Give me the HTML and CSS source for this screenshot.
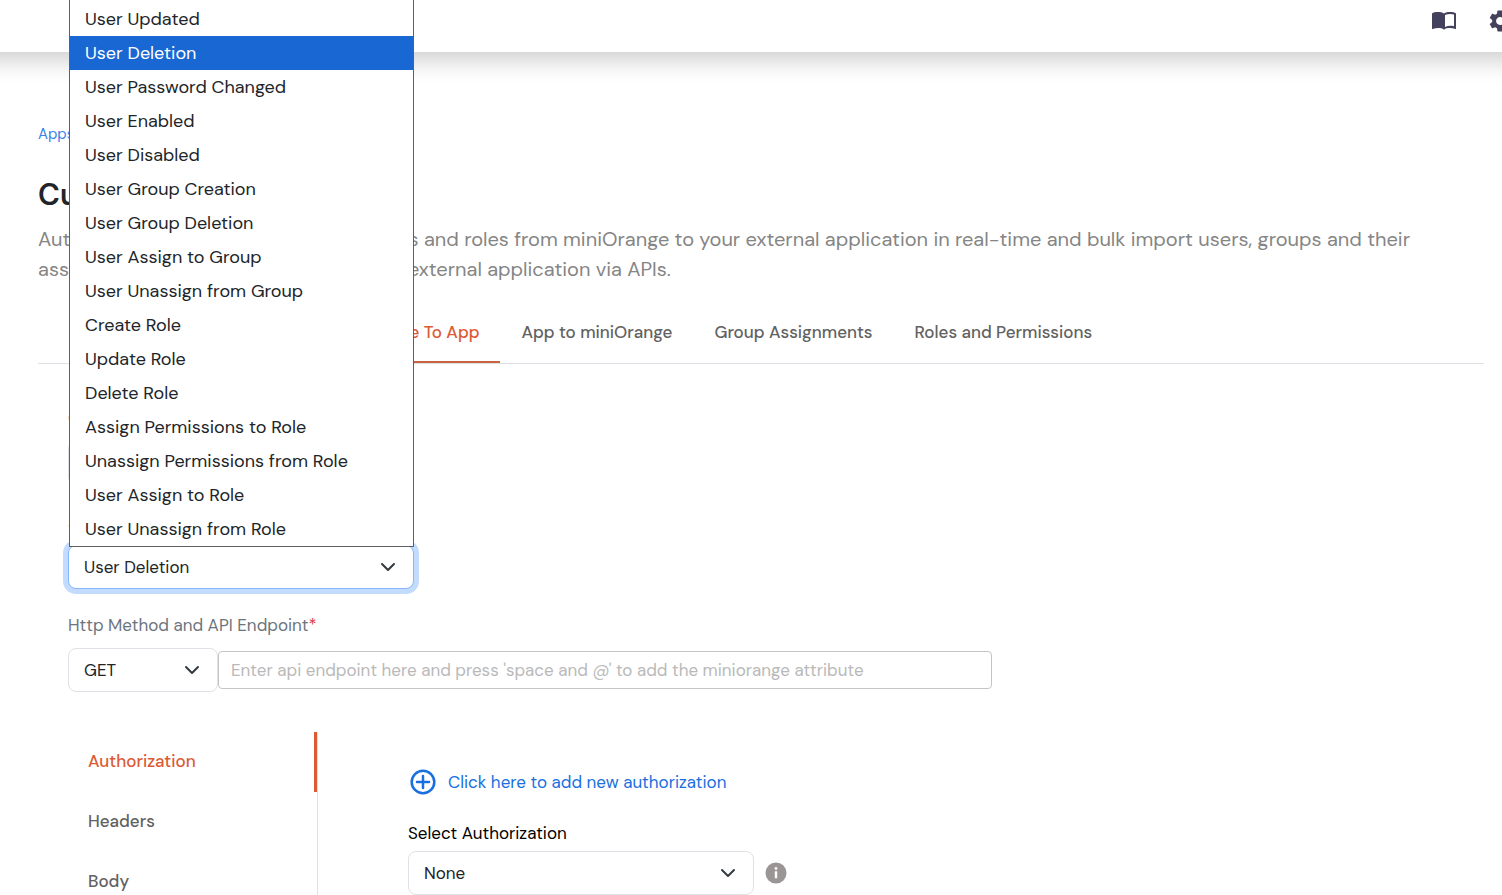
FILE: index.html
```
<!DOCTYPE html>
<html lang="en">
<head>
    <meta charset="UTF-8">
    <meta name="viewport" content="width=device-width, initial-scale=1.0">
    <title>Custom App Provisioning</title>
    <link rel="stylesheet" href="styles.css">
</head>
<body>
    <header class="topbar">
        <button type="button" class="icon-btn" aria-label="Documentation">
            <svg width="24" height="20" viewBox="0 0 24 20" fill="#44415c">
                <path fill-rule="evenodd" d="M12 2.6C9.800 1.100 7 .9 4.500 1.100 3 1.200 1.600 1.500.6 2c-.4.2-.6.5-.6.900v14.600c0 .5.3.7.700.600C4.500 16.800 8.900 16.600 12 18.700c3.100-2.100 7.500-1.900 11.300-.6.4.1.700-.1.700-.6V2.900c0-.4-.2-.7-.6-.9-1-.5-2.400-.8-3.900-.9C17 .9 14.200 1.100 12 2.600zm1 1.500c2.600-1.400 5.800-1.500 9-.7v11.900c-3-.7-6.200-.6-9 .7V4.100z"/>
            </svg>
        </button>
        <button type="button" class="icon-btn" aria-label="Settings">
            <svg width="24" height="24" viewBox="1 1 22 22" fill="#44415c">
                <path d="M19.140 12.940c.04-.3.060-.61.060-.94 0-.32-.02-.64-.07-.94l2.030-1.580c.18-.14.23-.41.120-.61l-1.920-3.320c-.12-.22-.37-.29-.59-.22l-2.390.96c-.5-.38-1.030-.7-1.620-.94l-.36-2.540c-.04-.24-.24-.41-.48-.41h-3.840c-.24 0-.43.17-.47.410l-.36 2.540c-.59.24-1.130.57-1.620.940l-2.390-.96c-.22-.08-.47 0-.59.220L2.740 8.870c-.12.21-.08.470.120.610l2.030 1.580c-.05.3-.09.630-.09.940s.02.640.070.940l-2.030 1.580c-.18.14-.23.410-.12.610l1.920 3.320c.12.220.370.290.590.220l2.390-.96c.5.380 1.030.7 1.620.940l.36 2.540c.05.240.240.410.480.410h3.840c.24 0 .44-.17.470-.41l.36-2.540c.59-.24 1.130-.56 1.620-.94l2.390.96c.22.080.470 0 .59-.22l1.920-3.320c.12-.22.070-.47-.12-.61l-2.010-1.580zM12 15.600c-1.980 0-3.600-1.620-3.600-3.600s1.620-3.600 3.600-3.600 3.600 1.620 3.600 3.600-1.620 3.600-3.600 3.600z"/>
            </svg>
        </button>
    </header>

    <main class="page">
        <nav class="breadcrumb" aria-label="Breadcrumb"><a href="#">Apps</a></nav>
        <h1 class="page-title">Custom App</h1>
        <p class="page-desc">Automated provisioning for users, groups and roles from miniOrange to your external application in real-time and bulk import users, groups and their assignments from miniOrange into your external application via APIs.</p>

        <nav class="tabs">
            <a href="#" class="tab">Configuration</a>
            <a href="#" class="tab active">miniOrange To App</a>
            <a href="#" class="tab">App to miniOrange</a>
            <a href="#" class="tab">Group Assignments</a>
            <a href="#" class="tab">Roles and Permissions</a>
        </nav>

        <form class="api-form">
            <label class="form-label" for="config">Configuration</label>
            <select class="form-select" id="config">
                <option>Default</option>
            </select>

            <label class="form-label" for="event">Select Event<span class="required">*</span></label>
            <div class="dropdown">
                <select class="form-select focused" id="event">
                    <option>User Deletion</option>
                </select>
                <!-- open event list -->
                <ul class="dropdown-list" role="listbox" aria-label="Events">
                    <li role="option">User Updated</li>
                    <li role="option" class="selected" aria-selected="true">User Deletion</li>
                    <li role="option">User Password Changed</li>
                    <li role="option">User Enabled</li>
                    <li role="option">User Disabled</li>
                    <li role="option">User Group Creation</li>
                    <li role="option">User Group Deletion</li>
                    <li role="option">User Assign to Group</li>
                    <li role="option">User Unassign from Group</li>
                    <li role="option">Create Role</li>
                    <li role="option">Update Role</li>
                    <li role="option">Delete Role</li>
                    <li role="option">Assign Permissions to Role</li>
                    <li role="option">Unassign Permissions from Role</li>
                    <li role="option">User Assign to Role</li>
                    <li role="option">User Unassign from Role</li>
                </ul>
            </div>

            <label class="form-label" for="endpoint">Http Method and API Endpoint<span class="required">*</span></label>
            <div class="endpoint-row">
                <select class="form-select method" aria-label="Http method">
                    <option>GET</option>
                    <option>POST</option>
                    <option>PUT</option>
                    <option>DELETE</option>
                </select>
                <input type="text" class="endpoint-input" id="endpoint" placeholder="Enter api endpoint here and press 'space and @' to add the miniorange attribute">
            </div>

            <div class="request">
                <nav class="side-tabs">
                    <a href="#" class="side-tab active">Authorization</a>
                    <a href="#" class="side-tab">Headers</a>
                    <a href="#" class="side-tab">Body</a>
                </nav>
                <div class="request-panel">
                    <a href="#" class="add-link">
                        <svg width="26" height="26" viewBox="0 0 26 26" fill="none" stroke="#1a6fe0" stroke-width="2.500">
                            <circle cx="13" cy="13" r="11.300"/>
                            <path d="M13 7v12M7 13h12" stroke-linecap="round"/>
                        </svg>
                        Click here to add new authorization
                    </a>
                    <label class="panel-label" for="auth">Select Authorization</label>
                    <div class="auth-row">
                        <select class="form-select" id="auth">
                            <option>None</option>
                        </select>
                        <svg width="22" height="22" viewBox="0 0 22 22">
                            <circle cx="11" cy="11" r="10.500" fill="#9b9595"/>
                            <circle cx="11" cy="6.500" r="1.400" fill="#fff"/>
                            <path d="M9.800 9.300h2.400v7h-2.400z" fill="#fff"/>
                        </svg>
                    </div>
                </div>
            </div>
        </form>
    </main>
</body>
</html>
```
FILE: styles.css
```
* {
    margin: 0;
    padding: 0;
    box-sizing: border-box;
    font-family: 'DM Sans', Inter, sans-serif;
}

body {
    background: #fff;
    color: #212529;
    font-size: 17px;
    line-height: 24px;
    overflow: hidden;
}

a {
    text-decoration: none;
}

/* top bar */
.topbar {
    display: flex;
    justify-content: flex-end;
    gap: 32px;
    height: 52px;
    margin: 0 -40px;
    padding: 9px 30px 0;
    background: #fff;
    box-shadow: 0 8px 24px rgba(0, 0, 0, 0.2);
}

.icon-btn {
    display: flex;
    align-items: center;
    height: 24px;
    background: none;
    border: none;
    cursor: pointer;
}

/* page heading */
.page {
    padding: 70px 18px 0 38px;
}

.breadcrumb {
    font-size: 15px;
}

.breadcrumb a {
    color: #3b82e6;
}

.page-title {
    margin-top: 29px;
    font-size: 30px;
    font-weight: 600;
    line-height: 40px;
}

.page-desc {
    margin-top: 9px;
    color: #858585;
    font-size: 20px;
    line-height: 30px;
}

.tabs {
    display: flex;
    margin-top: 16px;
    padding-left: 117px;
    border-bottom: 1px solid #dee2e6;
}

.tab {
    padding: 20px 21px 17px;
    border-bottom: 2px solid transparent;
    color: #626262;
    font-weight: 500;
}

.tab.active {
    color: #dc5a34;
    border-color: #c9623f;
}

/* form */
.api-form {
    display: flex;
    flex-direction: column;
    padding: 42px 0 0 30px;
}

.form-label {
    margin-bottom: 11px;
    color: #6c757d;
}

.required {
    color: #dc3545;
}

.form-select {
    width: 346px;
    height: 44px;
    padding: 0 40px 0 15px;
    appearance: none;
    background: #fff url("data:image/svg+xml,%3Csvg xmlns='http://www.w3.org/2000/svg' viewBox='0 0 16 16'%3E%3Cpath fill='none' stroke='%23343a40' stroke-linecap='round' stroke-linejoin='round' stroke-width='2' d='m2 5 6 6 6-6'/%3E%3C/svg%3E") no-repeat right 17px center / 16px;
    border: 1px solid #dee2e6;
    border-radius: 8px;
    color: #212529;
    font-size: 17px;
}

.form-select + .form-label {
    margin-top: 26px;
    margin-bottom: 10px;
}

.form-select.focused {
    display: block;
    border-color: #86b7fe;
    box-shadow: 0 0 0 5px #c2dbfe;
}

.dropdown {
    position: relative;
    width: 346px;
    margin-bottom: 24px;
}

.dropdown-list {
    position: absolute;
    bottom: calc(100% - 2px);
    left: 1px;
    right: 0;
    padding-top: 4px;
    background: #fff;
    border: 1px solid #5f5f5f;
    font-size: 18px;
    list-style: none;
}

.dropdown-list li {
    padding: 5px 15px;
}

.dropdown-list .selected {
    background: #1967d2;
    color: #fff;
}

.endpoint-row {
    display: flex;
    align-items: center;
}

.form-select.method {
    width: 150px;
}

.endpoint-input {
    width: 774px;
    height: 38px;
    padding: 0 12px;
    border: 1px solid #c4c4c4;
    border-radius: 4px;
    color: #212529;
    font-size: 17px;
}

.endpoint-input::placeholder {
    color: #b9b9b9;
}

/* request settings */
.request {
    display: flex;
    margin-top: 40px;
}

.side-tabs {
    width: 250px;
    border-right: 1px solid #dee2e6;
}

.side-tab {
    display: block;
    padding: 17px 20px 19px;
    color: #626262;
    font-weight: 500;
}

.side-tab.active {
    border-right: 3px solid #dc5a34;
    color: #dc5a34;
}

.request-panel {
    padding: 37px 0 0 90px;
}

.add-link {
    display: flex;
    align-items: center;
    gap: 12px;
    padding-left: 2px;
    color: #1a6fe0;
}

.panel-label {
    display: block;
    margin: 26px 0 6px;
    color: #000;
}

.auth-row {
    display: flex;
    align-items: center;
    gap: 11px;
}
```
